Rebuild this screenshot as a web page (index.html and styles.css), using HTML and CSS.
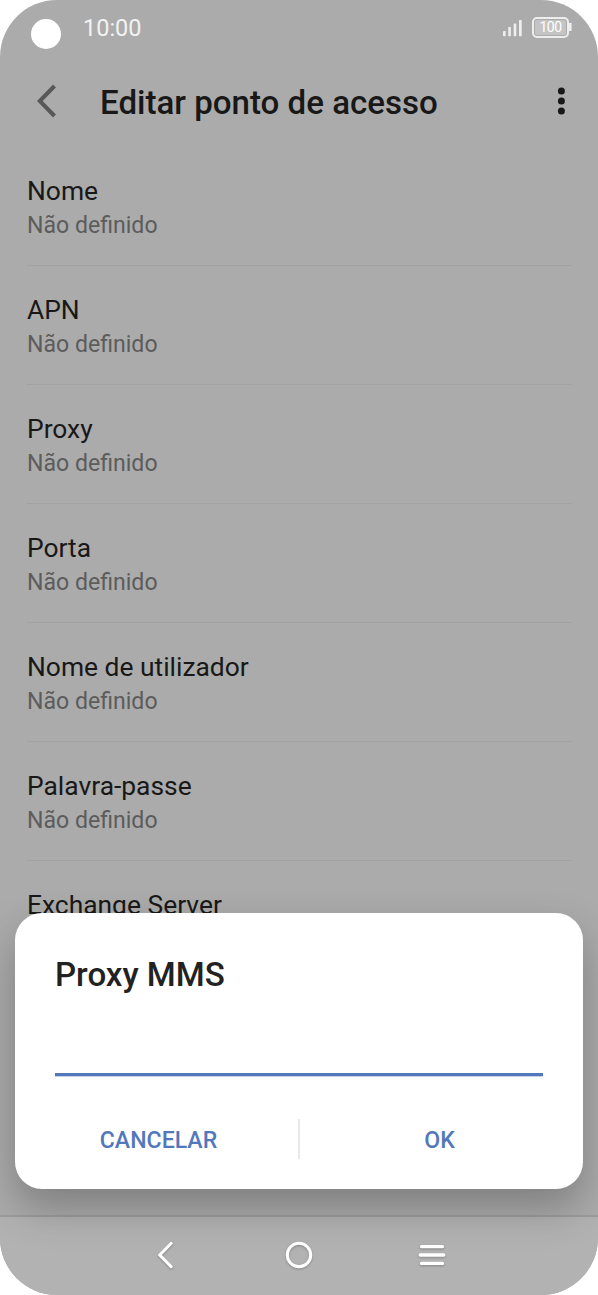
FILE: index.html
```html
<!DOCTYPE html>
<html lang="pt">
<head>
<meta charset="utf-8">
<title>Editar ponto de acesso</title>
<link rel="stylesheet" href="styles.css">
</head>
<body>
<div class="phone">
  <div class="status">
    <span class="camera"></span>
    <span class="clock">10:00</span>
    <svg class="signal" width="20" height="18" viewBox="0 0 20 18"><g fill="#eee"><rect x="1" y="12" width="2.6" height="5.2" rx=".6"/><rect x="6.3" y="8" width="2.6" height="9.2" rx=".6"/><rect x="11.7" y="4.6" width="2.6" height="12.6" rx=".6"/><rect x="17" y="1" width="2.7" height="16.2" rx=".6"/></g></svg>
    <span class="battery"><span class="level">100</span></span>
    <span class="tip"></span>
  </div>
  <header class="header">
    <svg class="back" width="20" height="34" viewBox="0 0 20 34"><path d="M18.5 2 L3.8 17 L18.5 32" fill="none" stroke="#585858" stroke-width="4"/></svg>
    <h1 class="title">Editar ponto de acesso</h1>
    <svg class="more" width="8" height="28" viewBox="0 0 8 28"><g fill="#181818"><circle cx="4.4" cy="4" r="3.5"/><circle cx="4.4" cy="14" r="3.5"/><circle cx="4.4" cy="24" r="3.5"/></g></svg>
  </header>
  <main class="list">
    <div class="row"><div class="name">Nome</div><div class="value">Não definido</div></div>
    <div class="row"><div class="name">APN</div><div class="value">Não definido</div></div>
    <div class="row"><div class="name">Proxy</div><div class="value">Não definido</div></div>
    <div class="row"><div class="name">Porta</div><div class="value">Não definido</div></div>
    <div class="row"><div class="name">Nome de utilizador</div><div class="value">Não definido</div></div>
    <div class="row"><div class="name">Palavra-passe</div><div class="value">Não definido</div></div>
    <div class="row last"><div class="name">Exchange Server</div></div>
  </main>
  <nav class="nav">
    <svg class="nav-icon" width="30" height="36" viewBox="0 0 30 36"><path d="M20 6.5 L8.7 18 L20 29.5" fill="none" stroke="#fff" stroke-width="3.2" stroke-linecap="round" stroke-linejoin="round"/></svg>
    <svg class="nav-icon" width="30" height="36" viewBox="0 0 30 36"><circle cx="15" cy="18" r="11.7" fill="none" stroke="#fff" stroke-width="3.1"/></svg>
    <svg class="nav-icon" width="30" height="36" viewBox="0 0 30 36"><path d="M4.5 9.6 H25.5 M3.2 18 H26.8 M4.5 26.4 H25.5" fill="none" stroke="#fff" stroke-width="3.3" stroke-linecap="round"/></svg>
  </nav>
  <section class="dialog">
    <h2 class="dialog-title">Proxy MMS</h2>
    <div class="field"></div>
    <div class="actions">
      <span class="action">CANCELAR</span>
      <span class="divider"></span>
      <span class="action ok">OK</span>
    </div>
  </section>
</div>
</body>
</html>
```
FILE: styles.css
```css
body {
  margin: 0;
  background: #fff;
  font-family: Roboto, "Liberation Sans", sans-serif;
}
.phone {
  position: relative;
  display: flex;
  flex-direction: column;
  width: 598px;
  height: 1295px;
  overflow: hidden;
  border-radius: 57px;
  background: #ababab;
}
.status {
  display: flex;
  align-items: flex-start;
  height: 55px;
  flex: none;
}
.camera {
  width: 30px;
  height: 30px;
  margin: 19px 0 0 31px;
  border-radius: 50%;
  background: #fff;
}
.clock {
  margin: 13px 0 0 22px;
  font-size: 23.5px;
  line-height: 30px;
  color: #f2f2f2;
}
.signal {
  margin: 19px 0 0 auto;
}
.battery {
  box-sizing: border-box;
  width: 37px;
  height: 21px;
  margin: 17px 0 0 10px;
  padding: 1px;
  border: 2px solid #eee;
  border-radius: 5px;
}
.level {
  display: block;
  height: 15px;
  border-radius: 2px;
  background: #c4c4c4;
  color: #fff;
  font-size: 14px;
  line-height: 15px;
  letter-spacing: -0.6px;
  text-align: center;
}
.tip {
  width: 2px;
  height: 8px;
  margin: 23px 27px 0 0;
  border-radius: 0 1px 1px 0;
  background: #eee;
}
.battery + .tip {
  border-right: 1px solid #d4d4d4;
  margin-right: 26px;
}
.header {
  display: flex;
  align-items: flex-start;
  height: 92px;
  flex: none;
}
.back {
  margin: 29px 0 0 36px;
}
.title {
  margin: 28px 0 0 44px;
  font-size: 33.1px;
  line-height: 40px;
  font-weight: 500;
  color: #181818;
  white-space: nowrap;
}
.more {
  margin: 32px 33px 0 auto;
}
.list {
  flex: 1;
  min-height: 0;
  padding: 0 26px 0 27px;
  overflow: hidden;
}
.row {
  box-sizing: border-box;
  height: 119px;
  padding-top: 27px;
  border-bottom: 1px solid #a2a2a2;
}
.last {
  border: 0;
}
.name {
  font-size: 26.4px;
  line-height: 34px;
  color: #181818;
}
.value {
  font-size: 23.1px;
  line-height: 36px;
  color: #5c5c5c;
}
.nav {
  box-sizing: border-box;
  display: flex;
  justify-content: center;
  gap: 103px;
  height: 80px;
  flex: none;
  padding-top: 20px;
  border-top: 2px solid #9c9c9c;
  background: #b2b2b2;
}
.nav-icon {
  filter: drop-shadow(0 1px 1px rgba(0, 0, 0, .25));
}
.dialog {
  position: absolute;
  left: 15px;
  top: 913px;
  box-sizing: border-box;
  width: 568px;
  height: 276px;
  padding: 42px 40px 0;
  border-radius: 27px;
  background: #fff;
  box-shadow: 0 19px 42px rgba(0, 0, 0, .26);
}
.dialog-title {
  margin: 0;
  font-size: 33.1px;
  line-height: 40px;
  font-weight: 500;
  color: #222;
}
.field {
  height: 78px;
  border-bottom: 3px solid #5377bb;
  box-shadow: 0 1px 0 #c3d0e8;
}
.actions {
  display: flex;
  align-items: center;
  height: 40px;
  margin: 43px -40px 0;
}
.action {
  flex: 1;
  padding: 3px 0 0 4px;
  text-align: center;
  font-size: 23.1px;
  line-height: 30px;
  font-weight: 500;
  color: #5377bb;
}
.ok {
  padding: 3px 4px 0 0;
}
.divider {
  width: 2px;
  height: 40px;
  background: #e8e8e8;
}
```
